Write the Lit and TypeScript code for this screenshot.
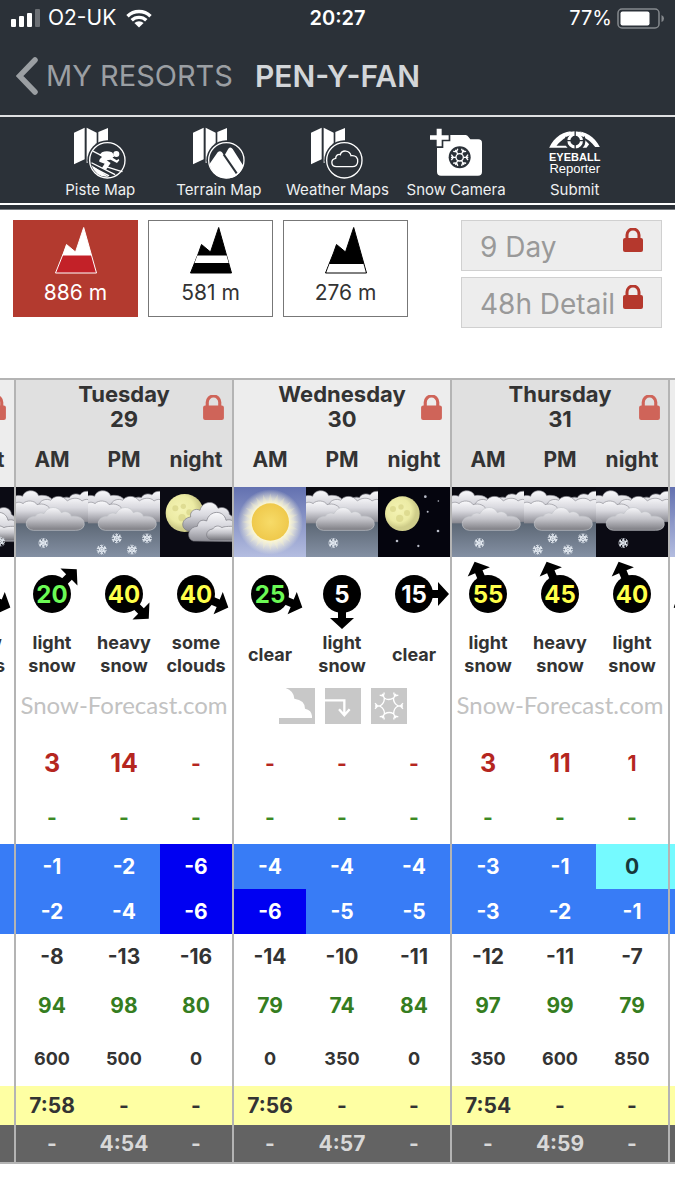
import { LitElement, html, svg, css, nothing } from "lit";
import { customElement, property, state } from "lit/decorators.js";
import { classMap } from "lit/directives/class-map.js";

type Sky = "snow" | "heavy" | "nightSnow" | "moonClouds" | "moonSnow" | "sun" | "moon";

interface Slot {
  part: string;
  sky: Sky;
  wind: number;
  heading: number;
  label: string;
  snow: string;
  max: number;
  min: number;
  chill: number;
  humidity: number;
  freezing: number;
  sunrise: string;
  sunset: string;
}

interface Day {
  name: string;
  date: number;
  strip: "brand" | "icons" | "none";
  slots: Slot[];
}

const slot = (
  part: string, sky: Sky, wind: number, heading: number, label: string, snow: string,
  max: number, min: number, chill: number, humidity: number, freezing: number,
  sunrise = "-", sunset = "-",
): Slot => ({ part, sky, wind, heading, label, snow, max, min, chill, humidity, freezing, sunrise, sunset });

const DAYS: Day[] = [
  { name: "Monday", date: 28, strip: "none", slots: [
    slot("AM", "snow", 30, 112.5, "light snow", "1", -1, -1, -8, 90, 600, "7:59"),
    slot("PM", "snow", 30, 112.5, "light snow", "1", -1, -2, -8, 92, 600, "-", "4:52"),
    slot("night", "moonSnow", 35, 112.5, "snow shwrs", "-", -2, -2, -9, 93, 0),
  ] },
  { name: "Tuesday", date: 29, strip: "brand", slots: [
    slot("AM", "snow", 20, 45, "light snow", "3", -1, -2, -8, 94, 600, "7:58"),
    slot("PM", "heavy", 40, 135, "heavy snow", "14", -2, -4, -13, 98, 500, "-", "4:54"),
    slot("night", "moonClouds", 40, 112.5, "some clouds", "-", -6, -6, -16, 80, 0),
  ] },
  { name: "Wednesday", date: 30, strip: "icons", slots: [
    slot("AM", "sun", 25, 112.5, "clear", "-", -4, -6, -14, 79, 0, "7:56"),
    slot("PM", "snow", 5, 180, "light snow", "-", -4, -5, -10, 74, 350, "-", "4:57"),
    slot("night", "moon", 15, 90, "clear", "-", -4, -5, -11, 84, 0),
  ] },
  { name: "Thursday", date: 31, strip: "brand", slots: [
    slot("AM", "snow", 55, -22.5, "light snow", "3", -3, -3, -12, 97, 350, "7:54"),
    slot("PM", "heavy", 45, -22.5, "heavy snow", "11", -1, -2, -11, 99, 600, "-", "4:59"),
    slot("night", "nightSnow", 40, -22.5, "light snow", "1", 0, -1, -7, 79, 850),
  ] },
  { name: "Friday", date: 1, strip: "none", slots: [
    slot("AM", "sun", 10, 247.5, "clear", "-", 0, -1, -5, 80, 800, "7:53"),
    slot("PM", "sun", 10, 247.5, "clear", "-", 0, -1, -5, 80, 800, "-", "5:01"),
    slot("night", "moon", 10, 247.5, "clear", "-", -1, -2, -6, 80, 500),
  ] },
];

const DAY_WIDTH = 218;
const PEEK = 14;

@customElement("weather-scene")
class WeatherScene extends LitElement {
  @property() sky: Sky = "snow";

  static styles = css`
    :host { display: block; }
    svg { display: block; width: 100%; height: 70px; }
  `;

  private flake(x: number, y: number) {
    return svg`<g transform="translate(${x} ${y})" stroke="#e4eaf2" stroke-width="2.6" fill="none">
      ${[0, 60, 120, 180, 240, 300].map(a => svg`<path transform="rotate(${a})" d="M0 0V-15M-5-14L0-9L5-14M-6-4L0-8L6-4"/>`)}
    </g>`;
  }

  private overcast() {
    return svg`
      <g stroke="#8d8d94" stroke-width="2">
        <path fill="url(#cloud)" d="M130 80V44c6-12 20-16 30-12c6-12 22-14 32-8c6-10 16-12 30-11v70z"/>
        <path fill="url(#cloud)" d="M-6 80V30c8-6 18-6 26-2c4-20 40-24 48-2c22-4 40 4 46 22v40z"/>
        <path fill="url(#cloud)" d="M70 104V50c6-12 22-16 34-10c10-16 38-16 50 2c12-10 34-12 44 0c8-6 18-6 26-2v64z"/>
        <path fill="url(#cloud)" d="M-6 108V52c8-8 20-8 27-2c10-12 36-10 42 3c18-6 38 2 42 20v35z"/>
        <path fill="url(#front)" stroke="#c3c5ca" d="M52 130c-30-2-28-42 6-42c6-10 16-12 26-8c10-24 44-24 52-3c12-6 26-2 30 11c28-4 42 12 38 28c-3 10-14 14-26 14z"/>
      </g>`;
  }

  private brokenCloud() {
    return svg`
      <g stroke="#77777f" stroke-width="2">
        <path fill="url(#cloud)" d="M88 132c-28-4-26-38 4-42c-4-18 14-28 28-20c6-28 44-32 54-6c18-8 34 4 34 18l14 10v40z"/>
        <path fill="url(#cloud)" d="M100 162c-22-6-18-42 12-44c2-16 14-22 28-16c8-34 52-34 58-2c10-4 22 0 26 8v56z"/>
        <path fill="url(#front)" d="M152 158c-18-4-16-30 6-32c8-12 20-10 28-4c6-4 20-4 36-4v40z"/>
      </g>`;
  }

  private moon(x: number, y: number, r: number) {
    return svg`<circle cx=${x} cy=${y} r=${r} fill="url(#lunar)"/>
      <g fill="#d9d68a" opacity=".75">
        <circle cx=${x - 28} cy=${y - 14} r="9"/><circle cx=${x - 4} cy=${y - 20} r="8"/>
        <circle cx=${x + 14} cy=${y - 2} r="9"/><circle cx=${x - 8} cy=${y + 14} r="11"/>
      </g>`;
  }

  private content() {
    const night = svg`<rect width="216" height="210" fill="#0b0b14"/>`;
    const grey = svg`<rect width="216" height="210" fill="#090910"/><rect y="92" width="216" height="118" fill="url(#haze)"/>`;
    switch (this.sky) {
      case "snow":
        return svg`${grey}${this.overcast()}${this.flake(82, 168)}`;
      case "heavy":
        return svg`${grey}${this.overcast()}${[[86, 154], [177, 154], [41, 188], [132, 188]].map(([x, y]) => this.flake(x, y))}`;
      case "nightSnow":
        return svg`${night}${this.overcast()}${this.flake(82, 168)}`;
      case "moonClouds":
        return svg`${night}${this.moon(74, 78, 57)}${this.brokenCloud()}`;
      case "moonSnow":
        return svg`${night}${this.moon(74, 70, 50)}${this.brokenCloud()}${this.flake(174, 164)}${this.flake(90, 184)}`;
      case "sun":
        return svg`<rect width="216" height="210" fill="url(#day)"/>
          <circle cx="109" cy="105" r="98" fill="url(#glow)"/>
          <g fill="#fff8c8" opacity=".25">
            ${Array.from({ length: 24 }, (_, i) => svg`<path transform="translate(109 105) rotate(${i * 15})" d="M-7-58L0-86L7-58z"/>`)}
          </g>
          <circle cx="109" cy="105" r="56" fill="url(#sol)"/>`;
      case "moon":
        return svg`<rect width="216" height="210" fill="#05050e"/>${this.moon(73, 80, 52)}
          <g fill="#b9bcc8">
            <circle cx="142" cy="29" r="4"/><circle cx="181" cy="42" r="2.5"/><circle cx="149" cy="74" r="3"/>
            <circle cx="180" cy="132" r="4"/><circle cx="57" cy="162" r="4"/><circle cx="121" cy="177" r="3.5"/>
          </g>`;
    }
  }

  render() {
    return html`<svg viewBox="0 0 216 210" preserveAspectRatio="none" aria-hidden="true">
      <defs>
        <linearGradient id="cloud" x2="0" y2="1"><stop offset="0" stop-color="#fafafc"/><stop offset=".45" stop-color="#d8d8de"/><stop offset="1" stop-color="#8c8c94"/></linearGradient>
        <linearGradient id="front" x2="0" y2="1"><stop offset="0" stop-color="#f6f6f9"/><stop offset=".5" stop-color="#c4c4ca"/><stop offset="1" stop-color="#7c7c82"/></linearGradient>
        <linearGradient id="haze" x2="0" y2="1"><stop offset="0" stop-color="#56616e"/><stop offset="1" stop-color="#8490a3"/></linearGradient>
        <linearGradient id="day" x2="0" y2="1"><stop offset="0" stop-color="#6371b0"/><stop offset="1" stop-color="#b4bde0"/></linearGradient>
        <radialGradient id="glow"><stop offset=".55" stop-color="#fffbd8"/><stop offset=".72" stop-color="#fffbe0" stop-opacity=".7"/><stop offset="1" stop-color="#fffbe0" stop-opacity="0"/></radialGradient>
        <radialGradient id="sol"><stop offset="0" stop-color="#f7db68"/><stop offset="1" stop-color="#efc94c"/></radialGradient>
        <radialGradient id="lunar" cx=".4" cy=".4"><stop offset="0" stop-color="#f4f3b4"/><stop offset=".7" stop-color="#eceba4"/><stop offset="1" stop-color="#cfcd8a"/></radialGradient>
      </defs>
      ${this.content()}
    </svg>`;
  }
}

@customElement("wind-dial")
class WindDial extends LitElement {
  @property({ type: Number }) speed = 0;
  @property({ type: Number }) heading = 0;

  static styles = css`
    :host { display: block; }
    svg { display: block; margin: 0 auto; width: 72px; height: 72px; }
    text { font: 700 24px Inter, "Liberation Sans", sans-serif; text-anchor: middle; }
    .calm { fill: #fff; }
    .breeze { fill: #6bfa55; }
    .strong { fill: #ffff4a; }
  `;

  render() {
    const level = this.speed >= 40 ? "strong" : this.speed >= 20 ? "breeze" : "calm";
    return html`<svg viewBox="-36 -36 72 72">
      <circle r="19"/>
      <path transform="rotate(${this.heading})" d="M-4 0V-24H-12L0-35L12-24H4V0z"/>
      <text class=${level} y="9">${this.speed}</text>
    </svg>`;
  }
}

const lock = html`<svg class="lock" viewBox="0 0 20 24" aria-hidden="true">
  <path d="M4 11V7a6 6 0 0 1 12 0v4" fill="none" stroke="currentColor" stroke-width="3"/>
  <rect y="10" width="20" height="14" rx="2" fill="currentColor"/>
</svg>`;

const mapSheet = svg`<path fill="#fff" d="M0 17L32 2V97L0 112z M38 2L68 17V108H38z M73 15L102 3V60H73z"/>
  <circle cx="100" cy="100" r="60" fill="#2b3138"/>`;
const ring = svg`<circle cx="100" cy="100" r="53" fill="none" stroke="#fff" stroke-width="4"/>`;

const pisteIcon = html`<svg class="tool-icon" viewBox="0 0 156 156" aria-hidden="true">
  ${mapSheet}${ring}
  <circle cx="127" cy="81" r="9" fill="#fff"/>
  <path fill="#fff" d="M84 76Q98 70 114 76L120 84L116 92L128 100L134 96L136 100L129 108L110 98L98 100L110 108L96 128L84 122L92 110L76 104Q74 98 84 90L76 84z"/>
  <path fill="none" stroke="#fff" stroke-width="4" stroke-linecap="round" d="M58 73L80 84L118 88M54 108L122 142M58 122L104 146M96 119L144 134"/>
  <path fill="#fff" d="M52 114L104 150Q66 152 52 114z"/>
</svg>`;

const terrainIcon = html`<svg class="tool-icon" viewBox="0 0 156 156" aria-hidden="true">
  ${mapSheet}${ring}
  <path fill="#fff" d="M49 112L74 76Q81 69 87 76L94 86L106 65Q113 57 119 66L151 116Q138 154 100 154Q62 154 49 112z"/>
  <path fill="none" stroke="#2b3138" stroke-width="6" d="M92 82L131 139"/>
</svg>`;

const weatherIcon = html`<svg class="tool-icon" viewBox="0 0 156 156" aria-hidden="true">
  ${mapSheet}${ring}
  <path fill="none" stroke="#fff" stroke-width="4" d="M76 119C60 119 57 97 74 94C74 84 83 80 88 83C92 68 116 68 120 86C134 84 142 92 140 105C139 114 132 119 124 119z"/>
</svg>`;

const cameraIcon = html`<svg class="tool-icon" viewBox="0 0 156 156" aria-hidden="true">
  <path fill="#fff" d="M0 25H20V5H35V25H56V38H35V58H20V38H0z"/>
  <path fill="#fff" d="M61 24H107Q112 24 115 29L121 37H145Q156 37 156 48V134Q156 146 144 146H33Q21 146 21 134V63H40V43H61z"/>
  <circle cx="89" cy="91" r="33" fill="#2b3138"/>
  <g stroke="#fff" stroke-width="4" fill="none" transform="translate(89 91)">
    <circle r="11"/>
    ${[0, 60, 120, 180, 240, 300].map(a => svg`<path transform="rotate(${a + 30})" d="M0-11V-26M-8-25L0-19L8-25"/>`)}
  </g>
</svg>`;

const eyeIcon = html`<svg class="eye" viewBox="0 0 152 54" aria-hidden="true">
  <path fill="#fff" d="M0 50C16 16 44 0 76 0C108 0 136 16 152 48L138 48C128 34 114 22 98 17L54 17C40 24 28 36 22 44L50 44L56 50z"/>
  <path fill="#fff" d="M98 17L104 44L98 50H112L120 40z"/>
  <circle cx="78" cy="29" r="31" fill="#2b3138"/>
  <path fill="#fff" d="M44 9Q76-8 110 9L104 18Q76 4 50 18z"/>
  <circle cx="78" cy="29" r="19" fill="none" stroke="#fff" stroke-width="9"/>
  <path stroke="#2b3138" stroke-width="4" d="M78 0V18M78 40V54M52 29H66M90 29H104"/>
</svg>`;

const wifi = html`<svg class="wifi" viewBox="0 0 26 19" aria-hidden="true">
  <g fill="none" stroke="#fff" stroke-width="3.4"><path d="M1.5 7.2A16.5 16.5 0 0 1 24.500 7.2"/><path d="M5.700 11.300A10.500 10.500 0 0 1 20.300 11.300"/></g>
  <path fill="#fff" d="M13 18.500L8.400 14A6.600 6.600 0 0 1 17.600 14z"/>
</svg>`;

const TOOLS = [
  { label: "Piste Map", icon: pisteIcon },
  { label: "Terrain Map", icon: terrainIcon },
  { label: "Weather Maps", icon: weatherIcon },
  { label: "Snow Camera", icon: cameraIcon },
];

const PEAK = "M0.500 46L8.500 26L11.500 17.500L20.500 25L28.700 0.500L41.500 46z";

const ELEVATIONS = [
  { height: "886 m", art: svg`<path d=${PEAK} fill="#c32128" stroke="#fff"/><path fill="#fff" d="M7.300 28.500L11.500 17.500L20.500 25L28.700 0.500L36.600 28.500z"/>` },
  { height: "581 m", art: svg`<path d=${PEAK} stroke="#000"/><path fill="#fff" d="M7.300 28.500H36.600L38.700 36H4.500z"/>` },
  { height: "276 m", art: svg`<path d=${PEAK} stroke="#000"/><path fill="#fff" d="M4.400 37H38.500L40.800 45.400H1.300z"/>` },
];

@customElement("app-root")
class AppRoot extends LitElement {
  @state() private level = 0;

  static styles = css`
    :host {
      display: block;
      min-height: 100vh;
      background: #fff;
      color: #333;
      font-family: Inter, "Liberation Sans", sans-serif;
    }
    * { box-sizing: border-box; }
    button { font: inherit; color: inherit; background: none; border: 0; padding: 0; margin: 0; cursor: pointer; }
    a { color: inherit; text-decoration: none; }
    .top { background: #2b3138; color: #fff; padding-bottom: 4px; border-bottom: 1px solid #777b80; }
    .status {
      display: grid;
      grid-template-columns: 1fr auto 1fr;
      align-items: center;
      height: 36px;
      padding: 0 11px;
      font-size: 20px;
      line-height: 24px;
    }
    .carrier, .power { display: flex; align-items: center; }
    .carrier { gap: 8px; font-size: 21px; }
    .power { gap: 5px; justify-content: flex-end; }
    .bars { width: 29px; height: 18px; }
    .wifi { width: 26px; height: 19px; margin-left: 2px; }
    .battery { width: 47px; height: 21px; }
    .clock { font-weight: 600; }
    .nav { display: flex; align-items: center; gap: 22px; height: 79px; padding: 0 16px; }
    .back { display: flex; align-items: center; gap: 8px; color: #9b9fa3; font-size: 29px; line-height: 36px; }
    .chevron { width: 22px; height: 38px; }
    h1 { margin: 0; font-size: 30px; line-height: 36px; font-weight: 600; color: #d3d6d9; }
    .tools {
      display: grid;
      grid-template-columns: repeat(5, 1fr);
      padding: 10px 41px 4px;
      border-top: 2px solid #dfe0e1;
      border-bottom: 2px solid #fff;
    }
    .tool { display: flex; flex-direction: column; align-items: center; gap: 2px; font-size: 15px; line-height: 18px; white-space: nowrap; color: #eef0f1; }
    .tool-icon { width: 52px; height: 52px; }
    .reporter { display: flex; flex-direction: column; align-items: center; height: 52px; padding-top: 4px; font-family: "Liberation Sans", Arial, sans-serif; color: #fff; }
    .eye { width: 51px; height: 18px; }
    .reporter b { font-size: 11px; line-height: 12px; margin-top: 2px; }
    .reporter span { font-size: 13px; line-height: 11px; }
    .controls { display: flex; justify-content: space-between; padding: 10px 13px 0; }
    .levels { display: flex; gap: 10px; }
    .level {
      display: flex;
      flex-direction: column;
      align-items: center;
      width: 125px;
      height: 97px;
      padding-top: 6px;
      border: 1px solid #777;
      font-size: 21px;
      line-height: 26px;
      gap: 6px;
    }
    .level.on { background: #b33a2f; border-color: #b33a2f; color: #fff; }
    .peak { width: 42px; height: 47px; }
    .ranges { display: flex; flex-direction: column; gap: 6px; width: 201px; }
    .range {
      display: flex;
      justify-content: space-between;
      height: 51px;
      padding: 9px 18px 0;
      background: #ededed;
      border: 1px solid #d0d0d0;
      color: #999;
      font-size: 28px;
      line-height: 34px;
      white-space: nowrap;
    }
    .range .lock { width: 20px; height: 24px; color: #b5382d; margin-top: -2px; flex: none; }
    .scroller { margin-top: 50px; overflow-x: auto; scrollbar-width: none; border-top: 2px solid #b4b4b4; border-bottom: 2px solid #b4b4b4; }
    table { border-collapse: separate; border-spacing: 0; table-layout: fixed; width: 1090px; text-align: center; }
    .first { width: 74px; }
    .next { width: 72px; }
    th, td { padding: 0; font-weight: 700; font-size: 21px; line-height: 25px; }
    .edge { border-left: 2px solid #b4b4b4; }
    .odd { background: #ededed; }
    .even { background: #e0e0e0; }
    .day { position: relative; height: 52px; padding-top: 1px; font-size: 22px; }
    .day .lock { position: absolute; right: 8px; top: 15px; width: 21px; height: 25px; color: #cf6459; }
    .parts th { height: 55px; }
    .labels td { height: 45px; padding-top: 1px; font-size: 18px; line-height: 23px; }
    .dials td { height: 73px; }
    .strip td { height: 59px; padding-bottom: 2px; }
    .brand { font: 400 24px/28px Lato, sans-serif; color: #c2c2c2; padding-bottom: 2px; }
    .legend { display: flex; justify-content: center; gap: 10px; padding-left: 2px; }
    .legend svg { width: 36px; height: 36px; }
    .snow td { height: 54px; color: #b5261f; font-size: 25px; }
    .snow .small { font-size: 21px; }
    .rain td { height: 54px; color: #3c8a24; }
    .temps td { height: 45px; }
    .mild { background: #75faff; color: #17383a; }
    .cold { background: #387cf6; color: #fff; }
    .bitter { background: #0000f2; color: #fff; }
    .humidity td { height: 52px; color: #357d20; }
    .freezing td { height: 55px; font-size: 18px; }
    .sunrise td { height: 39px; background: #feffa3; }
    .sunset td { height: 37px; background: #636363; color: #d8d8d8; }
  `;

  firstUpdated() {
    this.renderRoot.querySelector(".scroller")!.scrollLeft = DAY_WIDTH - PEEK;
  }

  private cells(value: (s: Slot) => unknown, tone?: (s: Slot) => string) {
    return DAYS.flatMap(d => d.slots.map((s, i) =>
      html`<td class=${classMap({ edge: i === 0, [tone?.(s) || "plain"]: true })}>${value(s)}</td>`));
  }

  private tone(t: number) {
    return t >= 0 ? "mild" : t > -6 ? "cold" : "bitter";
  }

  private strip(day: Day) {
    if (day.strip === "brand") return html`<div class="brand">Snow-Forecast.com</div>`;
    if (day.strip === "none") return nothing;
    return html`<div class="legend">
      <svg viewBox="0 0 108 108" aria-hidden="true"><path fill="#c8c8c8" d="M20 0H108V108H0V90H99V84Q98 66 78 62Q78 36 46 32Q44 8 20 0z"/></svg>
      <svg viewBox="0 0 108 108" aria-hidden="true"><rect width="108" height="108" fill="#c8c8c8"/><path fill="none" stroke="#fff" stroke-width="7" d="M0 37H58V80M42 64L58 82L74 64"/></svg>
      <svg viewBox="-54 -54 108 108" aria-hidden="true"><rect x="-54" y="-54" width="108" height="108" fill="#c8c8c8"/>
        <g fill="none" stroke="#fff" stroke-width="4">
          ${[30, 90, 150, 210, 270, 330].map(a => svg`<g transform="rotate(${a})"><path d="M0-24V-42M-8-42L0-34L8-42"/><path d="M0-27Q7-14 23-14"/></g>`)}
        </g>
      </svg>
    </div>`;
  }

  render() {
    return html`
      <header class="top">
        <div class="status">
          <div class="carrier">
            <svg class="bars" viewBox="0 0 29 18" aria-hidden="true"><g fill="#fff"><rect y="10" width="5" height="8" rx="1"/><rect x="8" y="7" width="5" height="11" rx="1"/><rect x="16" y="4" width="5" height="14" rx="1"/><rect x="24" width="5" height="18" rx="1" opacity=".3"/></g></svg>
            <span>O2-UK</span>${wifi}
          </div>
          <span class="clock">20:27</span>
          <div class="power">
            <span>77%</span>
            <svg class="battery" viewBox="0 0 47 21" aria-hidden="true"><rect x="1" y="1" width="41" height="19" rx="4" fill="none" stroke="#85898d" stroke-width="1.500"/><rect x="3.500" y="3.500" width="29" height="14" rx="2" fill="#fff"/><path d="M44.500 7Q47 8 47 10.500T44.500 14z" fill="#85898d"/></svg>
          </div>
        </div>
        <nav class="nav">
          <button class="back"><svg class="chevron" viewBox="0 0 22 38" aria-hidden="true"><path d="M19 3L3.500 19L19 35" fill="none" stroke="currentColor" stroke-width="5.500" stroke-linecap="round"/></svg>MY RESORTS</button>
          <h1>PEN-Y-FAN</h1>
        </nav>
        <nav class="tools" aria-label="Resort tools">
          ${TOOLS.map(t => html`<a class="tool" href="#">${t.icon}<span>${t.label}</span></a>`)}
          <a class="tool" href="#"><div class="reporter">${eyeIcon}<b>EYEBALL</b><span>Reporter</span></div><span>Submit</span></a>
        </nav>
      </header>
      <main>
        <section class="controls">
          <div class="levels">
            ${ELEVATIONS.map((e, i) => html`<button class=${classMap({ level: true, on: i === this.level })} aria-pressed=${i === this.level} @click=${() => (this.level = i)}>
              <svg class="peak" viewBox="0 0 42 47" aria-hidden="true">${e.art}</svg>${e.height}
            </button>`)}
          </div>
          <div class="ranges">
            <button class="range">9 Day${lock}</button>
            <button class="range">48h Detail${lock}</button>
          </div>
        </section>
        <div class="scroller">
          <table aria-label="Snow forecast">
            <colgroup>${DAYS.map(() => html`<col class="first"><col class="next"><col class="next">`)}</colgroup>
            <thead>
              <tr>${DAYS.map((d, i) => html`<th colspan="3" class="day edge ${i % 2 ? "even" : "odd"}">${d.name}<br>${d.date}${lock}</th>`)}</tr>
              <tr class="parts">${DAYS.map((d, i) => d.slots.map((s, j) => html`<th class="${i % 2 ? "even" : "odd"} ${j ? "" : "edge"}">${s.part}</th>`))}</tr>
            </thead>
            <tbody>
              <tr>${this.cells(s => html`<weather-scene .sky=${s.sky}></weather-scene>`)}</tr>
              <tr class="dials">${this.cells(s => html`<wind-dial .speed=${s.wind} .heading=${s.heading}></wind-dial>`)}</tr>
              <tr class="labels">${this.cells(s => s.label)}</tr>
              <tr class="strip">${DAYS.map(d => html`<td class="edge" colspan="3">${this.strip(d)}</td>`)}</tr>
              <tr class="snow">${this.cells(s => s.snow, s => (s.snow === "1" || s.snow === "-" ? "small" : ""))}</tr>
              <tr class="rain">${this.cells(() => "-")}</tr>
              <tr class="temps">${this.cells(s => s.max, s => this.tone(s.max))}</tr>
              <tr class="temps">${this.cells(s => s.min, s => this.tone(s.min))}</tr>
              <tr class="temps">${this.cells(s => s.chill)}</tr>
              <tr class="humidity">${this.cells(s => s.humidity)}</tr>
              <tr class="freezing">${this.cells(s => s.freezing)}</tr>
              <tr class="sunrise">${this.cells(s => s.sunrise)}</tr>
              <tr class="sunset">${this.cells(s => s.sunset)}</tr>
            </tbody>
          </table>
        </div>
      </main>
    `;
  }
}
